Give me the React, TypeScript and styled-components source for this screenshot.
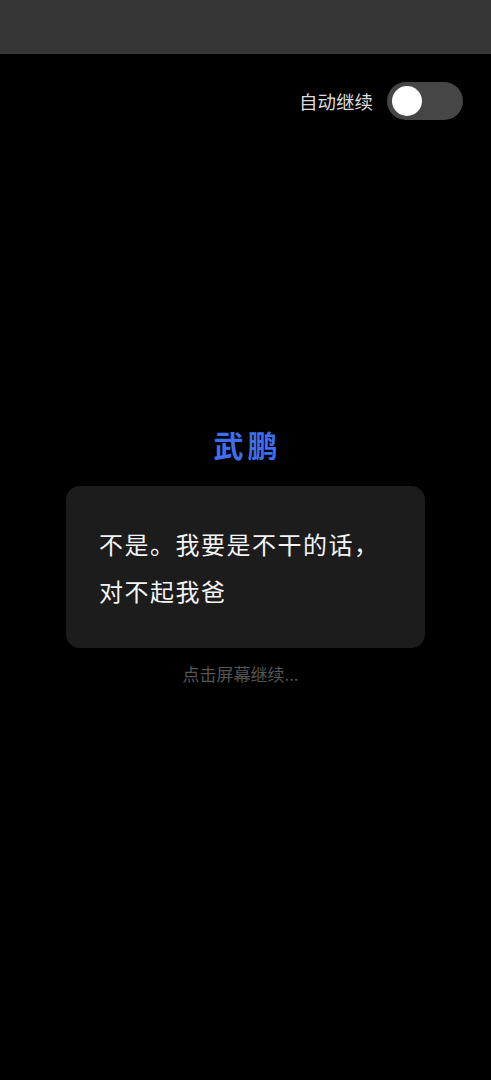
import styled, { createGlobalStyle } from 'styled-components';
import { useState } from 'react';

const GlobalStyle = createGlobalStyle`
  html, body {
    margin: 0;
    padding: 0;
    background: #000;
  }
  body {
    font-family: "Noto Sans CJK SC", "Noto Sans", sans-serif;
  }
`;

const Page = styled.div`
  min-height: 100vh;
  background: #000;
  display: flex;
  flex-direction: column;
`;

const TopBar = styled.div`
  height: 54px;
  background: #363636;
`;

const Controls = styled.div`
  display: flex;
  justify-content: flex-end;
  align-items: center;
  gap: 14px;
  padding: 28px 28px 0 0;
`;

const ControlLabel = styled.span`
  font-size: 18.5px;
  line-height: 24px;
  color: #dcdcdc;
`;

const Track = styled.button<{ on: boolean }>`
  position: relative;
  width: 76px;
  height: 38px;
  border: none;
  border-radius: 19px;
  padding: 0;
  background: ${({ on }) => (on ? '#3d6ff0' : '#464646')};
  cursor: pointer;
`;

const Knob = styled.span<{ on: boolean }>`
  position: absolute;
  top: 4px;
  left: ${({ on }) => (on ? '41px' : '5px')};
  width: 30px;
  height: 30px;
  border-radius: 50%;
  background: #fff;
`;

const Stage = styled.div`
  display: flex;
  flex-direction: column;
  align-items: center;
  margin-top: 304px;
`;

const Speaker = styled.div`
  font-size: 30px;
  line-height: 40px;
  font-weight: 700;
  letter-spacing: 4px;
  text-indent: 4px;
  color: #3d6ff0;
`;

const Bubble = styled.div`
  box-sizing: border-box;
  width: 359px;
  margin-top: 22px;
  padding: 34px 20px 34px 33px;
  background: #1c1c1c;
  border-radius: 14px;
`;

const Line = styled.div`
  font-size: 24px;
  line-height: 47px;
  letter-spacing: 1.5px;
  color: #f4f4f4;
`;

const Hint = styled.div`
  margin: 14px 10px 0 0;
  font-size: 17px;
  line-height: 24px;
  color: #555;
`;

export default function App() {
  const [auto, setAuto] = useState(false);
  const lines = ['不是。我要是不干的话，', '对不起我爸'];

  return (
    <Page>
      <GlobalStyle />
      <TopBar />
      <Controls>
        <ControlLabel>自动继续</ControlLabel>
        <Track on={auto} onClick={() => setAuto(!auto)}>
          <Knob on={auto} />
        </Track>
      </Controls>
      <Stage>
        <Speaker>武鹏</Speaker>
        <Bubble>
          {lines.map((l) => (
            <Line key={l}>{l}</Line>
          ))}
        </Bubble>
        <Hint>点击屏幕继续...</Hint>
      </Stage>
    </Page>
  );
}
